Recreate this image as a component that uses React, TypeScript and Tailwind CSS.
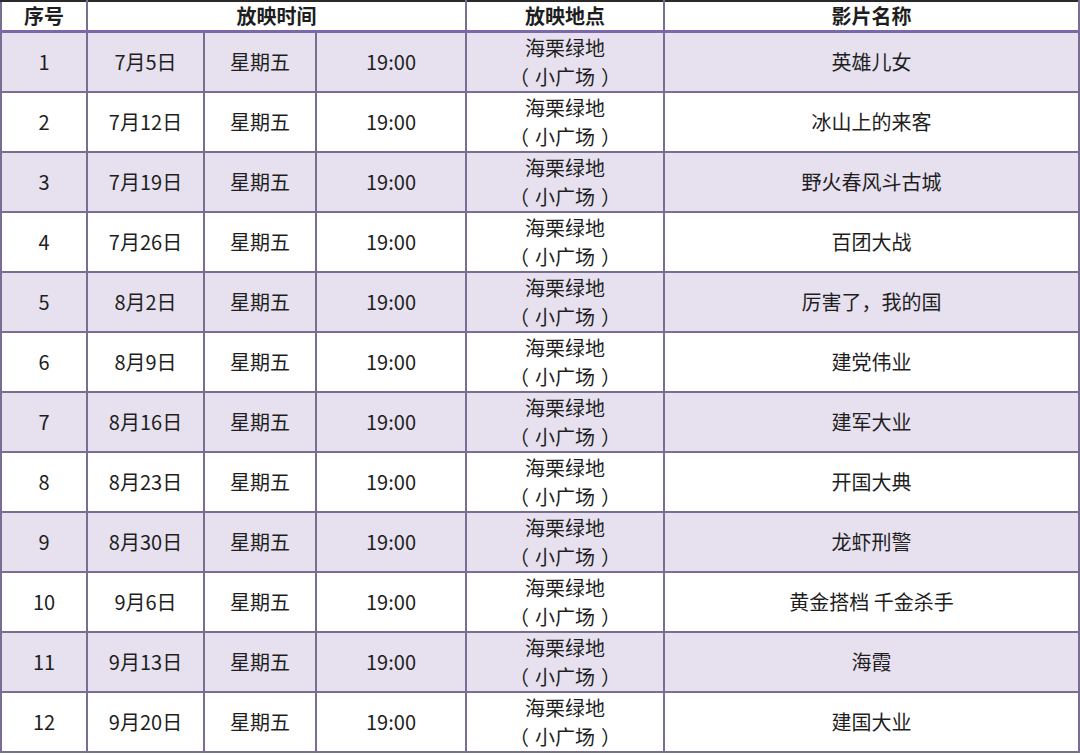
const rows = [
  { no: "1", date: "7月5日", film: "英雄儿女" },
  { no: "2", date: "7月12日", film: "冰山上的来客" },
  { no: "3", date: "7月19日", film: "野火春风斗古城" },
  { no: "4", date: "7月26日", film: "百团大战" },
  { no: "5", date: "8月2日", film: "厉害了，我的国" },
  { no: "6", date: "8月9日", film: "建党伟业" },
  { no: "7", date: "8月16日", film: "建军大业" },
  { no: "8", date: "8月23日", film: "开国大典" },
  { no: "9", date: "8月30日", film: "龙虾刑警" },
  { no: "10", date: "9月6日", film: "黄金搭档 千金杀手" },
  { no: "11", date: "9月13日", film: "海霞" },
  { no: "12", date: "9月20日", film: "建国大业" },
];

const cell = "border-2 border-[#7a6d92] p-0 text-center align-middle";
const head =
  "border-2 border-t-[#2a2a2a] border-b-[3px] border-b-[#7c68a8] border-x-[#7a6d92] p-0 font-bold leading-[28px] align-top";

export default function App() {
  return (
    <div
      className="w-[1080px] h-[756px] bg-white text-[20px] text-[#1e1e1e] overflow-hidden"
      style={{ fontFamily: '"Noto Sans CJK SC", "Noto Sans", sans-serif' }}
    >
      <table className="w-[1080px] table-fixed border-collapse">
        <colgroup>
          <col className="w-[86px]" />
          <col className="w-[117px]" />
          <col className="w-[112px]" />
          <col className="w-[150px]" />
          <col className="w-[198px]" />
          <col />
        </colgroup>
        <thead>
          <tr className="h-[30px]">
            <th className={head}>序号</th>
            <th colSpan={3} className={head}>
              放映时间
            </th>
            <th className={head}>放映地点</th>
            <th className={head}>影片名称</th>
          </tr>
        </thead>
        <tbody>
          {rows.map((r, i) => (
            <tr key={r.no} className={`h-[58px] ${i % 2 === 0 ? "bg-[#e6e0ef]" : "bg-white"}`}>
              <td className={cell}>{r.no}</td>
              <td className={cell}>{r.date}</td>
              <td className={cell}>星期五</td>
              <td className={cell}>19:00</td>
              <td className={`${cell} leading-[29px]`}>
                <div>海栗绿地</div>
                <div>
                  <span className="mr-[6px]">（</span>小广场<span className="ml-[6px]">）</span>
                </div>
              </td>
              <td className={cell}>{r.film}</td>
            </tr>
          ))}
        </tbody>
      </table>
    </div>
  );
}
